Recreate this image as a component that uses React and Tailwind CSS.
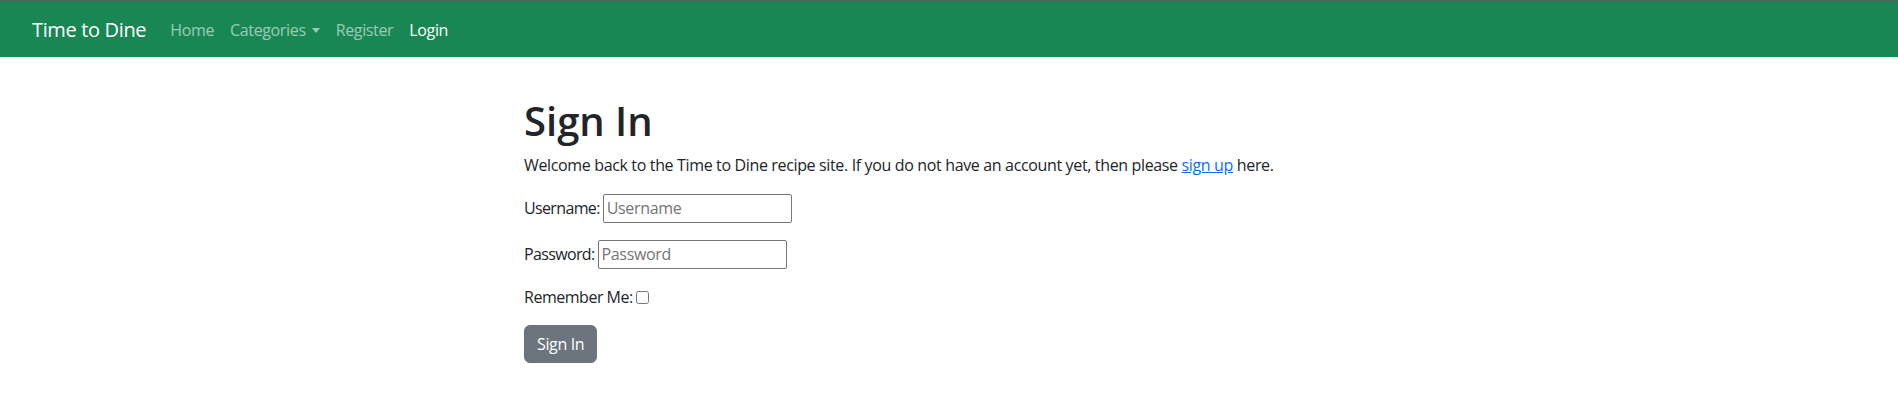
import { useState } from "react";

const font = { fontFamily: '"Open Sans", "Noto Sans", Arial, sans-serif' };

function NavBar() {
  return (
    <nav className="bg-[#198754] border-t-2 border-[#456b59] h-[57px] flex items-center pl-8">
      <a href="#" className="text-white text-[20px] leading-[30px] mr-4">Time to Dine</a>
      <ul className="flex items-center text-[16px] leading-6">
        <li><a href="#" className="block px-2 py-2 text-white/55">Home</a></li>
        <li>
          <a href="#" className="flex items-center px-2 py-2 text-white/55">
            Categories
            <span className="ml-[6px] mt-[1px] w-0 h-0 border-l-[4px] border-r-[4px] border-t-[5px] border-l-transparent border-r-transparent border-t-white/55" />
          </a>
        </li>
        <li><a href="#" className="block px-2 py-2 text-white/55">Register</a></li>
        <li><a href="#" className="block px-2 py-2 text-white">Login</a></li>
      </ul>
    </nav>
  );
}

export default function App() {
  const [remember, setRemember] = useState(false);

  return (
    <div className="min-h-screen bg-white text-[#212529] tracking-[-0.022em]" style={font}>
      <NavBar />
      <main className="max-w-[850px] mx-auto pt-10">
        <h1 className="text-[40px] leading-[48px] font-semibold tracking-normal mb-2">Sign In</h1>
        <p className="text-[16px] leading-6 mb-4">
          Welcome back to the Time to Dine recipe site. If you do not have an account yet, then please{" "}
          <a href="#" className="text-[#0d6efd] underline">sign up</a> here.
        </p>
        <form onSubmit={(e) => e.preventDefault()}>
          <p className="flex items-center mb-4 h-[30px]">
            <label htmlFor="id_login" className="tracking-[-0.04em] mr-[3px]">Username:</label>
            <input
              id="id_login"
              type="text"
              placeholder="Username"
              className="w-[189px] h-[29px] border border-[#767676] rounded-[2px] px-[3px] text-[16px] placeholder:text-[#757575] outline-none"
            />
          </p>
          <p className="flex items-center mb-4 h-[30px]">
            <label htmlFor="id_password" className="tracking-[-0.04em] mr-[3px]">Password:</label>
            <input
              id="id_password"
              type="password"
              placeholder="Password"
              className="w-[189px] h-[29px] border border-[#767676] rounded-[2px] px-[3px] text-[16px] placeholder:text-[#757575] outline-none"
            />
          </p>
          <p className="flex items-center mb-4 h-6">
            <label htmlFor="id_remember" className="tracking-[-0.03em] mr-[3px]">Remember Me:</label>
            <input
              id="id_remember"
              type="checkbox"
              checked={remember}
              onChange={(e) => setRemember(e.target.checked)}
              className="w-[13px] h-[13px]"
            />
          </p>
          <button
            type="submit"
            className="bg-[#6c757d] text-white text-[16px] leading-6 px-3 py-[6px] border border-[#6c757d] rounded-md"
          >
            Sign In
          </button>
        </form>
      </main>
    </div>
  );
}
